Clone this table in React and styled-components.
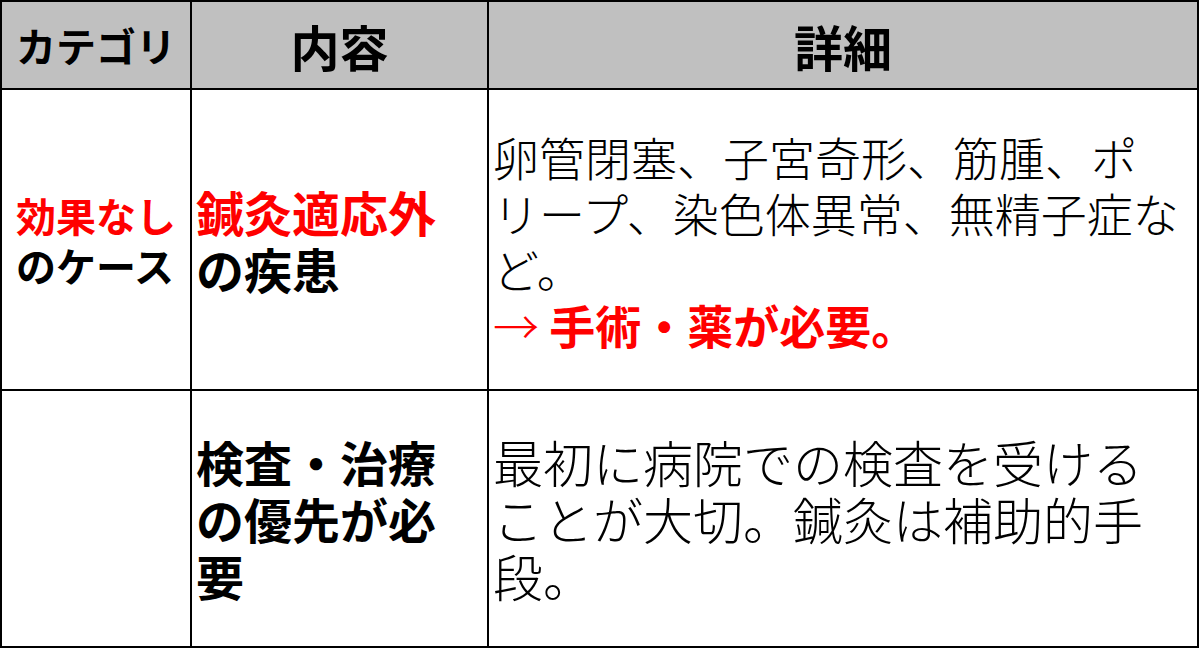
import React from 'react'
import styled, { createGlobalStyle } from 'styled-components'

const GlobalStyle = createGlobalStyle`
  html, body {
    margin: 0;
    padding: 0;
    background: #ffffff;
  }
  body {
    font-family: "Noto Sans CJK JP", "Noto Sans", sans-serif;
    color: #000000;
  }
`

const Table = styled.div`
  width: 1199px;
  height: 648px;
  box-sizing: border-box;
  display: grid;
  grid-template-columns: 190px 297px 1fr;
  grid-template-rows: 88px 301px 1fr;
  border-top: 2px solid #000;
  border-left: 2px solid #000;
`

const Cell = styled.div`
  box-sizing: border-box;
  border-right: 2px solid #000;
  border-bottom: 2px solid #000;
  display: flex;
  align-items: center;
  justify-content: ${p => (p.$center ? 'center' : 'flex-start')};
  padding: ${p => p.$pad || '0 4px'};
  background: ${p => (p.$head ? '#c0c0c0' : '#ffffff')};
`

const HeadText = styled.span`
  font-size: ${p => p.$size || 49}px;
  font-weight: 700;
  line-height: 1;
`

const Label = styled.div`
  font-size: 40px;
  font-weight: 700;
  line-height: 50px;
`

const Topic = styled.div`
  font-size: 48px;
  font-weight: 700;
  line-height: 57px;
`

const Detail = styled.div`
  font-size: ${p => p.$size || 46}px;
  font-weight: 300;
  line-height: ${p => p.$lh || 56}px;
  white-space: nowrap;
`

const Red = styled.span`
  color: #ff0000;
`

const Strong = styled.span`
  font-weight: 700;
`

export default function App() {
  return (
    <>
      <GlobalStyle />
      <Table>
        <Cell $head $center>
          <HeadText $size={40}>カテゴリ</HeadText>
        </Cell>
        <Cell $head $center>
          <HeadText>内容</HeadText>
        </Cell>
        <Cell $head $center>
          <HeadText>詳細</HeadText>
        </Cell>

        <Cell $center $pad="0">
          <Label>
            <Red>効果なし</Red>
            <br />
            のケース
          </Label>
        </Cell>
        <Cell>
          <Topic>
            <Red>鍼灸適応外</Red>
            <br />
            の疾患
          </Topic>
        </Cell>
        <Cell>
          <Detail>
            卵管閉塞、子宮奇形、筋腫、ポ
            <br />
            リープ、染色体異常、無精子症な
            <br />
            ど。
            <br />
            <Red>
              → <Strong>手術・薬が必要。</Strong>
            </Red>
          </Detail>
        </Cell>

        <Cell />
        <Cell>
          <Topic>
            検査・治療
            <br />
            の優先が必
            <br />
            要
          </Topic>
        </Cell>
        <Cell>
          <Detail $size={50} $lh={57}>
            最初に病院での検査を受ける
            <br />
            ことが大切。鍼灸は補助的手
            <br />
            段。
          </Detail>
        </Cell>
      </Table>
    </>
  )
}
